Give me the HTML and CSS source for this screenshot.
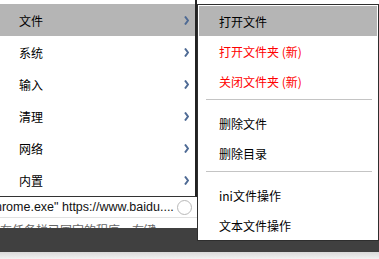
FILE: index.html
```html
<!DOCTYPE html>
<html lang="zh-CN">
<head>
    <meta charset="UTF-8">
    <title>菜单</title>
    <link rel="stylesheet" href="styles.css">
</head>
<body>

    <div class="desk">
        <div class="bg-top"></div>
        <div class="url-row">
            <span class="url">hrome.exe" https://www.baidu....</span>
            <span class="ring"></span>
        </div>
        <div class="rule"></div>
        <div class="cut-text"><span>在任务栏已固定的程序，右键</span></div>
        <div class="taskbar"></div>
        <div class="floor"></div>
    </div>

    <!-- main popup -->
    <ul class="menu main-menu">
        <li class="item active">文件<svg class="arrow" viewBox="0 0 5 9"><polyline points="1,0.5 4,4.5 1,8.5"/></svg></li>
        <li class="item">系统<svg class="arrow" viewBox="0 0 5 9"><polyline points="1,0.5 4,4.5 1,8.5"/></svg></li>
        <li class="item">输入<svg class="arrow" viewBox="0 0 5 9"><polyline points="1,0.5 4,4.5 1,8.5"/></svg></li>
        <li class="item">清理<svg class="arrow" viewBox="0 0 5 9"><polyline points="1,0.5 4,4.5 1,8.5"/></svg></li>
        <li class="item">网络<svg class="arrow" viewBox="0 0 5 9"><polyline points="1,0.5 4,4.5 1,8.5"/></svg></li>
        <li class="item">内置<svg class="arrow" viewBox="0 0 5 9"><polyline points="1,0.5 4,4.5 1,8.5"/></svg></li>
    </ul>

    <!-- 文件 submenu -->
    <ul class="menu sub-menu">
        <li class="sub-item active">打开文件</li>
        <li class="sub-item new">打开文件夹 (新)</li>
        <li class="sub-item new">关闭文件夹 (新)</li>
        <li class="sep"></li>
        <li class="sub-item">删除文件</li>
        <li class="sub-item">删除目录</li>
        <li class="sep"></li>
        <li class="sub-item">ini文件操作</li>
        <li class="sub-item">文本文件操作</li>
    </ul>

</body>
</html>
```

FILE: styles.css
```css
body {
    margin: 0;
    width: 379px;
    height: 259px;
    overflow: hidden;
    position: relative;
    background: #fff;
    font-family: "Noto Sans CJK SC", "Liberation Sans", sans-serif;
    font-size: 12px;
    color: #000;
}
.bg-top {
    height: 197px;
    background: #fff;
}
.url-row {
    height: 20px;
    display: flex;
    align-items: center;
    background: #fff;
    overflow: hidden;
}
.url {
    font-family: "Liberation Sans", sans-serif;
    font-size: 12.5px;
    margin-left: -5px;
    white-space: nowrap;
    color: #111;
}
.ring {
    flex: none;
    width: 13px;
    height: 13px;
    margin-left: 3px;
    border: 1px solid #b8b8b8;
    border-radius: 50%;
}
.rule {
    height: 1px;
    background: #e2e2e2;
}
.cut-text {
    height: 10px;
    width: 195px;
    overflow: hidden;
    background: #fff;
    line-height: 12px;
    white-space: nowrap;
}
.cut-text span {
    display: block;
    margin-top: 6px;
    color: #666;
}
.taskbar {
    height: 24px;
    background: #404040;
}
.floor {
    height: 7px;
    background: linear-gradient(#d9d9d9, #f2f2f2);
}

.menu {
    list-style: none;
    margin: 0;
    position: absolute;
    background: #fff;
}
.main-menu {
    left: 0;
    top: 0;
    width: 195px;
    padding: 4px 0 0;
    border-right: 2px solid #222;
    border-bottom: 1px solid #333;
}
.item {
    height: 32px;
    display: flex;
    align-items: center;
    justify-content: space-between;
    padding: 0 6px 0 19px;
}
.item.active, .sub-item.active {
    background: #b5b5b5;
}
.arrow {
    width: 5px;
    height: 9px;
    fill: none;
    stroke: #4e6a94;
    stroke-width: 2;
}
.sub-menu {
    left: 197px;
    top: 4px;
    width: 178px;
    padding: 1px 1px 0;
    border: 1px solid #2e2e2e;
    border-right-width: 2px;
}
.sub-item {
    height: 30px;
    display: flex;
    align-items: center;
    padding-left: 20px;
}
.sub-item.new {
    color: #f00;
}
.sep {
    height: 12px;
    box-sizing: border-box;
    padding-top: 3px;
    margin: 0 5px 0 7px;
}
.sep::before {
    content: "";
    display: block;
    height: 1px;
    background: #c4c4c4;
}
```
